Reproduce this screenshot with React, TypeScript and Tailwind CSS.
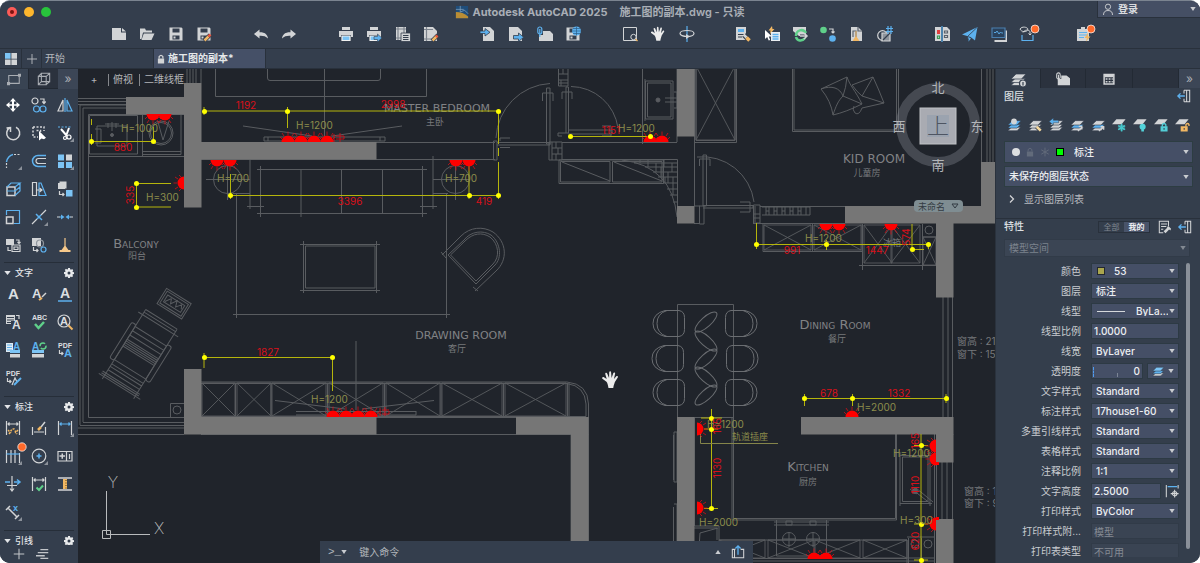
import type { ReactNode } from "react";

const G = "#d2d4d6";
const B = "#5db1ee";
const O = "#f1b763";
const GREEN = "#5fd08a";
const RED_BADGE = "#ff6a2b";

function Icon({ children, size = "size-4" }: { children: ReactNode; size?: string }) {
  return (
    <svg viewBox="0 0 16 16" className={`${size} shrink-0 overflow-visible`} fill="none" stroke={G} strokeWidth="1.2" aria-hidden="true">
      {children}
    </svg>
  );
}

const solid = { stroke: "none", fill: G };
const blue = { stroke: "none", fill: B };
const orange = { stroke: "none", fill: O };

const Hand = () => (
  <path
    stroke="none"
    fill="#ececec"
    d="M4.6 9.4 1.2 6.9c-.8-.9.4-2 1.3-1.3l2.3 1.6L3.6 2.9c-.2-1 1.2-1.4 1.6-.4l1.6 3.8.1-4.9c.1-1 1.6-1 1.6 0l.4 4.9 1.5-4.2c.4-.9 1.7-.5 1.5.5l-1 4.6 2-2.4c.7-.7 1.8.1 1.2 1L11.7 9.6c-.4 1-.5 2-1 3.1l-.4 2.1H6.3L6 13.3c-.3-1.5-.5-2.7-1.4-3.9z"
  />
);

const Floppy = () => (
  <path {...solid} fillRule="evenodd" d="M1.5 1.5h12l1 1v12h-13zM4.5 2.5v4h7v-4zM4.5 9.5v4h7v-4zM5.5 10.5h2v2h-2z" />
);

const Printer = () => (
  <>
    <path {...solid} d="M4 1h8v3H4zM1 5h14v6h-2V9H3v2H1z" />
    <path stroke="#f1f1f1" fill="#7cc4f5" d="M4 10h8v4.5H4z" />
  </>
);

const Page = () => <path {...solid} d="M3 1h7l4 4v10H3z" />;

const toolbar: ([string, ReactNode] | null)[] = [
  ["新建", <path {...solid} d="M1 2h9v4.5h5V14H1zM11 2l4 3.5h-4z" />],
  ["打开", <path {...solid} d="M1 2.5h5l1 2h6v2H4L2.5 13 1 13zM4.8 7.5H15.5L12.5 14H2.5z" />],
  ["保存", <Floppy />],
  ["另存为", <><Floppy /><path stroke="#343e4d" strokeWidth="4" d="m8 15 6-6" /><path stroke={O} strokeWidth="2.5" d="m8.5 14.5 4-4" /><path stroke="#e8553c" strokeWidth="2.5" d="m12.5 10.5 2-2" /></>],
  null,
  ["放弃", <path {...solid} d="M1 8l5.5-4.5v2.8C11 6 14.5 8 15 12.5 12.5 10 10 9.5 6.5 9.7v2.8z" />],
  ["重做", <path {...solid} d="M15 8 9.5 3.5v2.8C5 6 1.5 8 1 12.5c2.5-2.5 5-3 8.5-2.8v2.8z" />],
  null,
  ["打印", <Printer />],
  ["批处理打印", <><Printer /><path fill={B} stroke="#343e4d" strokeWidth=".6" d="M8 10.5h3.500V8l4.300 4-4.300 4v-2.500H8z" /></>],
  ["页面设置", <><path {...solid} d="M1 1h10v13H1z" /><path stroke="#7c838d" d="M3 1v13M9 1v13M1 3h10M1 12h10" /><path fill={G} stroke="#343e4d" strokeWidth=".8" d="M6 7h9.5v8.5H6z" /><path stroke="#343e4d" d="M8 9.5h5.5M8 11.5h5.5M8 13.5h5.5" /></>],
  ["图纸编辑", <><path {...solid} d="M1 1h9l4 4v10H1z" /><path stroke="#7c838d" d="M3.5 1v14M1 3.5h9M1 13h10" /><path stroke="#343e4d" strokeWidth="4" d="m9 15 6-6" /><path stroke={O} strokeWidth="2.5" d="m9.5 14.5 4-4" /><path stroke="#e8553c" strokeWidth="2.5" d="m13 11 1.5-1.5" /></>],
  null,
  ["输入", <><Page /><path fill={B} stroke="#343e4d" strokeWidth=".8" d="M0 5h5V2.5L10 6.3 5 10V7.5H0z" /></>],
  ["输出", <><path {...solid} d="M1 1h9l4 4v10H1z" /><path fill={B} stroke="#343e4d" strokeWidth=".8" d="M5.5 9.5h5V7l5.2 4.2-5.2 4.3V13h-5z" /></>],
  ["附着", <><path {...solid} d="M2 9h4V5h7l3 3v7H2z" /><rect x=".8" y="1" width="4" height="7" rx="2" stroke={B} /><path d="M2.8 3v8" stroke={B} /></>],
  ["保存到 Web", <><Floppy /><circle cx="11.5" cy="5" r="4.5" {...blue} /><path stroke="#2c5f88" strokeWidth=".7" d="M7 5h9M11.5.5v9M8 2.5h7M8 7.5h7" /></>],
  null,
  ["窗口缩放", <><path d="M1.5 1.5h13v13h-13z" strokeWidth="1" /><circle cx="11.5" cy="11" r="2.7" fill="#343e4d" strokeWidth="1" /><path stroke={O} d="m13.5 13 2 2" /></>],
  ["平移", <Hand />],
  ["动态观察", <><path d="M8 0v16" stroke={B} /><ellipse cx="8" cy="7.5" rx="7" ry="3" /><path {...solid} d="M7 8v5l4-2.5z" /></>],
  null,
  ["特性匹配", <><path {...solid} d="M1 1h10v13H1z" /><path stroke="#343e4d" d="M3 8.5h6M3 11h4" /><path {...blue} d="M3 3h6v3H3z" /><path stroke="#343e4d" strokeWidth="5" d="m9 9 5 5" /><path strokeWidth="2.5" d="m8.5 8.5 3 3" /><path stroke={O} strokeWidth="3.5" d="m11.5 11.5 3 3" /></>],
  ["快速选择", <><path {...orange} d="M8 0 4.5 4.5h2L6 8l4.5-5h-2z" /><path fill="#fff" stroke="none" d="M1 4v9l2.2-2 1.5 3.5 1.5-.6L4.8 10.5H8z" /><path stroke="none" fill="#e9edf0" d="M7 6h9v9H7z" /><path stroke={B} strokeWidth="1.5" d="M8.5 8.5h6M8.5 10.7h6M8.5 13h6" /></>],
  ["外部参照", <><path {...solid} d="M1 1h13v9H7L1 5z" /><path stroke={GREEN} strokeWidth="2.5" d="M4 10c0-6 7-8 10-3M13 12c-3 4-8 3-9-1" /><path stroke="#343e4d" strokeWidth="3" d="M8 10h7" /><path strokeWidth="1.5" d="M8 10h7M12 7l3 3-3 3" /></>],
  ["图块替换", <><circle cx="3.5" cy="4" r="3.3" stroke="none" fill={GREEN} /><circle cx="12.5" cy="12.5" r="3.3" {...blue} /><path d="M9 3h4v4M11.5 5.5 13 7l1.5-1.5" /></>],
  ["清理", <><path {...solid} d="M2 1h7l4 4v10H2z" /><path stroke="#59616d" d="M4 11V5h3v6M9 1v4h4" /><path {...orange} d="M6.5 5h1v5.5L10.5 15h-7l3-4.5z" /></>],
  ["计数", <><circle cx="5.5" cy="9.5" r="4.8" /><path fill="#8d939b" d="M5 7h8v8H5z" /><path d="M6 14 13 7" stroke="#343e4d" /><path stroke={B} d="M11 0v8M14 0v8M9 2.5h7M9 5.5h7" /></>],
  null,
  ["图形比较", <><path {...solid} d="M1 1h6v14H1zM9 1h4l3 3v11H9z" /><path stroke={B} d="M8 0v16" /><path fill="#e03e3e" stroke="none" d="M3 4h3v4H3z" /><path stroke="#3a9b55" d="M3.5 10h2v2.5h-2z" /><path stroke="#59616d" d="M10.5 5h3v2h-3zM10.5 9.5h3v2h-3z" /></>],
  ["共享", <><path {...blue} d="M0 8.5 15.5 1 13 14.5 8.5 11z" /><path {...blue} d="M5.5 10.5 6.5 15.5l2.5-3z" /><path stroke="#343e4d" strokeWidth=".8" d="M15 1.5 5.5 10.5l1 4" /></>],
  ["活动洞察", <><path {...solid} d="M3.5 14h11V4.5h1.5V16H3.5z" /><path fill="#2b425c" stroke="#4b7fae" d="M1 2h13v9.5H1z" /><path stroke={B} strokeWidth=".9" d="M3 6.5h2L6 5l2 3 1.5-2 1 1H12" /></>],
  ["连接", <><path strokeWidth="1" d="M1 3C3 0 8 1 9 3c-1 4-7 3-8 0zM4 6.5c2-3 5-3 7-1V9M9.5 7.5 11 9l1.5-1.5" /><path stroke={B} d="M3 9v5.500h11V9" /><circle cx="16" cy="3" r="4" fill={RED_BADGE} stroke="#fff" strokeWidth=".7" /></>],
  null,
  ["快捷方式", <><path {...solid} d="M1 3h12v12H1zM5 1h4v3H5z" /><path stroke={B} d="M3 6.5h8M3 9h8M3 11.5h5" /><path {...orange} d="M12 7 8.5 12h2.3L10 15.5l4.500-5h-2.500z" /><circle cx="15" cy="3" r="4" fill={RED_BADGE} stroke="#fff" strokeWidth=".7" /></>],
];

const Corner = () => <path stroke="none" fill="#8b919a" d="M17 13v4h-4z" />;
const Letter = ({ x = 2, y = 14, size = 15, color = "#dcdee0", children }: { x?: number; y?: number; size?: number; color?: string; children: string }) => (
  <text x={x} y={y} fontSize={size} fill={color} stroke="none" className="font-['Liberation_Sans',sans-serif] font-bold">{children}</text>
);

const modifyTools: [string, ReactNode][] = [
  ["移动", <path stroke="none" fill="#fff" d="M8 1 11 4.500H9v2.700h2.500V5L15 8l-3.500 3V8.800H9v2.700h2L8 15l-3-3.500h2V8.800H4.500V11L1 8l3.500-3v2.200H7V4.500H5z" />],
  ["复制", <><circle cx="4" cy="4" r="3" /><path d="M9 2h4v4M11.3 4.5 13 6.5l1.7-2" /><circle cx="5.5" cy="12" r="3" stroke={B} /><circle cx="12" cy="12" r="3" stroke={B} /></>],
  ["镜像", <><path d="M6 3v11H1z" /><path d="M10 3v11h5z" stroke={B} /><path d="M8 1v14" stroke={B} /></>],
  ["旋转", <path strokeWidth="1.5" d="M5 2.5A6.500 6.500 0 1 0 11 2.300M1.500 3l4-.5V7" />],
  ["选择", <><path strokeWidth="1.5" strokeDasharray="2 1.5" d="M2 2h11v4M2 2v10h5" /><path strokeDasharray="2 1.5" strokeWidth="1.5" d="M5.5 5.5h4v4" /><path stroke="none" fill="#fff" d="M8 6v9.500l2.500-2 2.500.7 2-1.500z" /></>],
  ["修剪", <><path stroke={B} strokeDasharray="2 1.5" d="M1 2h14" /><path stroke="#fff" strokeWidth="2" d="m4 4 6 7M12 3 9 11" /><circle cx="12" cy="12" r="2" stroke="#fff" /><circle cx="8" cy="13" r="1.5" stroke="#fff" /><Corner /></>],
  ["圆角", <><path stroke={B} strokeWidth="1.5" d="M1.500 9C2 5 5 2 8 1.500" /><path strokeDasharray="2 1.5" d="M9 1.500h6M1.500 10v5" /><Corner /></>],
  ["偏移", <><path stroke={B} strokeWidth="1.5" d="M15 2.500H7a5.500 5.500 0 0 0 0 11h8" /><path d="M15 5.500H7.500a2.500 2.500 0 0 0 0 5H15" /></>],
  ["阵列", <><path stroke="none" fill="#7cc4f5" d="M1 1.500h6v6H1zM9 9h6v6H9zM1 9h6v6H1z" /><path {...solid} d="M9 1.500h6v6H9z" /><Corner /></>],
  ["拉伸", <><path d="M2 6h8v8.500H2z" strokeWidth="1.5" /><path stroke={B} d="m2 6 4-4h9l-5 4M15 2v8l-5 4.500M2 10h8l5-4" /></>],
  ["斜切", <><path d="M1.500 1.500h4v13h-4z" /><path stroke={B} d="M8 2h2l5 12.500H8z" /><path d="M5 9h5M8.500 7l2.500 2-2.500 2" /></>],
  ["替换", <><path {...solid} d="M2.500.5h7v7h-7zM1 2h7v6H1z" /><path stroke="none" fill="#7cc4f5" d="M9 9h6.500v6.500H9z" /><path d="M2.500 10v3.500H7M5.500 12 7 13.500 5.500 15" /></>],
  ["缩放", <><path stroke={B} d="M1.500 6V1.500h13v13H9" /><path strokeWidth="1.5" d="M1.500 8h6.500v6.500H1.500z" /></>],
  ["打断", <><path d="M1 15 6 10M10 6l5-5" /><path stroke={B} strokeWidth="1.5" d="m5 5 6 6M6 10l4-4" /><Corner /></>],
  ["合并", <><path {...solid} d="M0 7.400h3v1.200H0zM13 7.400h3v1.200h-3z" /><path {...blue} d="M2.500 7.400H4v-2L7.500 8 4 10.600v-2H2.500zM13.500 7.400H12v-2L8.500 8l3.500 2.600v-2h1.500z" /></>],
  ["对调", <><path {...solid} d="M1 2h8v6H1z" /><path d="M7 8h8v6.500H7zM9 10h4v2.500H9z" /><path d="M11 3h3v3M3 10v3.500h3M12.500 5 14 6.500 15.500 5" /></>],
  ["转换", <><path {...solid} d="M1 1h9v8H1z" /><circle cx="9" cy="6.5" r="3.5" stroke="#8f959d" /><path d="M2.500 10v3.500H7M5.500 12 7 13.500 5.500 15" /><circle cx="12.5" cy="12.5" r="2.5" stroke={B} /></>],
  ["清扫", <path stroke="none" fill="#f7c98b" d="M7.400 1h1.200v8l3.900 5.500h-9L7.400 9zM2.500 13h11v2h-11z" />],
];

const textTools: [string, ReactNode][] = [
  ["多行文字", <Letter x={3} y={13} size={15}>A</Letter>],
  ["单行文字", <><Letter x={1} y={12} size={13}>A</Letter><path stroke={O} strokeWidth="2" d="m8 14 3-2" /><path strokeWidth="1.5" d="m11 11 4-4" /></>],
  ["文字样式", <><Letter x={3} y={12} size={14}>A</Letter><path stroke={B} d="M1 15h14" strokeWidth="1.5" /></>],
  ["文字对齐", <><path {...solid} d="M1 1h9v9H1z" /><path stroke="#343e4d" d="M2 3.500h7M2 6h7M2 8.500h7" /><path d="M11 1.500h3V5" /><path fill="#343e4d" stroke="none" d="M6 7h10v9H6z" /><Letter x={7} y={15} size={12}>A</Letter></>],
  ["拼写检查", <><Letter x={1} y={6} size={7}>ABC</Letter><path stroke={GREEN} strokeWidth="2.5" d="m4 10 3.500 4L13 8" /></>],
  ["查找文字", <><circle cx="7" cy="7" r="6" /><Letter x={3} y={11} size={11}>A</Letter><path stroke={O} strokeWidth="2" d="m11.500 11.500 4 4" /></>],
  ["文字图层", <><path stroke="none" fill="#dfeaf3" d="M1 1h7v9H1z" /><path stroke={B} d="M2 3h5M2 5.500h5M2 8h5" /><Letter x={8} y={8} size={10} color={B}>A</Letter><path stroke="none" fill="#7cc4f5" d="M5 8h10v3H5z" /><path {...solid} d="M5 12h10v3.500H5z" /></>],
  ["更新文字", <><Letter x={1} y={8} size={10} color={B}>A</Letter><circle cx="12" cy="4" r="3" stroke={GREEN} strokeDasharray="7 2" strokeWidth="1.5" /><path stroke="none" fill="#7cc4f5" d="M1 8h12v3H1z" /><path {...solid} d="M1 12h12v3.500H1z" /></>],
  ["PDF 文字", <><Letter x={1} y={6} size={7}>PDF</Letter><path d="M2.500 8v3.500H6M4.500 10 6 11.500 4.500 13" /><Letter x={7} y={15} size={11} color={B}>A</Letter></>],
  ["PDF 设置", <><Letter x={1} y={6} size={7}>PDF</Letter><path d="M2.500 8v3.500H6M4.500 10 6 11.500 4.500 13M7 15l3-7 2 4" /><path stroke={B} strokeWidth="2" d="m9 15 5-5 2-2" /></>],
];

const Dim = ({ c = G }: { c?: string }) => (
  <><path d="M1.500 1v14M14.500 1v14" /><path stroke={c} d="M3 4h10M4.500 2.500 3 4l1.500 1.500M11.500 2.500 13 4l-1.500 1.500" /></>
);

const dimTools: [string, ReactNode][] = [
  ["快速标注", <><Dim /><path stroke={O} strokeWidth="1.5" strokeDasharray="2 1.2" d="M4 14 7 9h2l3 5M3 10l3 3M13 10l-3 3" /></>],
  ["编辑标注", <><path d="M1.500 7v8M14.500 7v8M3 12h10" /><path stroke={O} strokeWidth="2.5" d="m7 10 3-3" /><path strokeWidth="1.5" d="m10 7 4-5" /></>],
  ["线性标注", <><Dim c={B} /><Corner /></>],
  ["连续标注", <><path d="M1.500 2v13M6 2v13M10 2v13M14.500 5v10" /><path stroke={B} d="M1.500 6h13" /><circle cx="17" cy="-1" r="4.200" fill={RED_BADGE} stroke="#fff" strokeWidth=".7" /><Corner /></>],
  ["直径标注", <><circle cx="8" cy="8" r="6.800" /><path stroke={B} strokeWidth="1.5" d="M8 5.500v5M5.500 8h5" /><Corner /></>],
  ["公差", <><path d="M1 3.500h14v9.500H1zM9.500 3.500V13" /><path {...solid} d="M2.500 7.300H4.500V5.500h1.500v1.800h2v1.500H6v2H4.500v-2h-2z" /><path d="M12.500 6v5" /></>],
  ["基线", <><path stroke={B} d="M0 6h5M9 6h6M12 3.500 15 6l-3 2.500" strokeWidth="1.5" /><path d="M7 0v15M5 12.500 7 15l2-2.500M2 9.500h10" /></>],
  ["检验", <><Dim /><path stroke={GREEN} strokeWidth="2" d="m5.500 11.500 2.500 2.500 4-4.500" /></>],
  ["调整间距", <><path d="M1 2h14M1 14h14" strokeWidth="1.5" /><path {...orange} d="M6 3h4v10H6z" /><path stroke="#8b6a30" d="M8 4.500h2M8 7h2M8 9.500h2M8 12h2" strokeWidth=".8" /></>],
  ["坐标标注", <><path d="m1 6 4-4M10 15l4-4M3 4l9 9" strokeWidth="1.5" /><Letter x={8} y={7} size={9} color={B}>x</Letter><Corner /></>],
];

function Gear() {
  return (
    <svg viewBox="0 0 16 16" className="size-2.5" fill="#e8eaec" aria-hidden="true">
      <path fillRule="evenodd" d="M6.500 0h3l.4 2 1.400.6L13 1.500 14.800 3.500l-1.200 1.600.6 1.400 1.800.3v2.700l-1.900.3-.6 1.400 1.100 1.700-1.900 1.800-1.600-1.100-1.300.6L9.500 16h-3l-.4-1.900-1.400-.6-1.600 1.200-2-2 1.200-1.600-.6-1.300L0 9.500v-3l1.900-.3.5-1.300L1.200 3.300l2-2 1.600 1.200 1.400-.6zM8 5.600a2.400 2.400 0 1 0 0 4.800 2.400 2.400 0 0 0 0-4.800z" />
    </svg>
  );
}

const Caret = ({ className = "" }: { className?: string }) => (
  <svg viewBox="0 0 8 6" className={`h-1 w-1.5 shrink-0 ${className}`} fill="#c9ccd0" aria-hidden="true"><path d="M0 0h8L4 6z" /></svg>
);

function ToolGrid({ tools }: { tools: [string, ReactNode][] }) {
  return (
    <div className="grid grid-cols-3">
      {tools.map(([name, icon]) => (
        <button key={name} aria-label={name} className="flex h-7 items-center justify-center">
          <Icon>{icon}</Icon>
        </button>
      ))}
    </div>
  );
}

function ToolHeading({ title }: { title: string }) {
  return (
    <div className="mx-1 flex h-[18px] shrink-0 items-center border-t border-[#262e39] pt-0.5 text-[9px] font-medium text-[#e3e5e8]">
      <svg viewBox="0 0 8 5" className="mr-1 h-1 w-[7px]" fill="#e3e5e8" aria-hidden="true"><path d="M0 0h8L4 5z" /></svg>
      <h2 className="flex-1 leading-none">{title}</h2>
      <button aria-label={`${title}设置`}><Gear /></button>
    </div>
  );
}

function ToolPalette() {
  return (
    <aside className="flex w-[78px] shrink-0 flex-col overflow-hidden bg-[#343e4d]">
      <div className="mb-0.5 flex h-5 shrink-0">
        <button aria-label="绘图" className="flex w-7 items-center justify-center bg-[#394453]">
          <Icon size="size-3.5"><path d="M2 4h12v9H2z" stroke="#a9adb3" /><path stroke="none" fill="#a9adb3" d="M0 11.500h3.500V15H0zM12.500 2H16v3.500h-3.500z" /></Icon>
        </button>
        <button aria-label="三维" className="flex w-[30px] items-center justify-center border-b border-l border-[#222933] bg-[#2b323e]">
          <Icon size="size-3.5"><path stroke="#a9adb3" d="M1.500 5h9v9.500h-9zM5 1.500h9.500V11H5zM1.500 5 5 1.500M10.500 5l4-3.500M10.500 14.500 14.500 11M1.500 14.500 5 11" /></Icon>
        </button>
        <button aria-label="更多" className="flex-1 bg-[#3c4656] text-[12px] leading-none text-[#a9adb3]">»</button>
      </div>
      <div className="mb-[3px] shrink-0"><ToolGrid tools={modifyTools} /></div>
      <div className="mb-1 shrink-0"><ToolHeading title="文字" /><ToolGrid tools={textTools} /></div>
      <div className="mb-1 shrink-0"><ToolHeading title="标注" /><ToolGrid tools={dimTools} /></div>
      <div className="min-h-0 flex-1 overflow-hidden"><ToolHeading title="引线" /></div>
      <div className="flex h-[18px] shrink-0 items-center gap-2.5 bg-[#343e4d] pl-3">
        <button aria-label="添加"><Icon size="size-3.5"><path d="M8 2v12M2 8h12" stroke="#c2c5c9" /></Icon></button>
        <button aria-label="列表"><Icon size="size-3.5"><path d="M5 3h9M2 6.500h12M0 10h10M5 13h9" stroke="#c2c5c9" strokeWidth="1.5" /></Icon></button>
      </div>
    </aside>
  );
}

/* ---------- floor plan ---------- */

const LINE = "#595c60";

// x, y, width, height
const walls = [
  [126, 97, 58, 17], [184, 83, 17, 124], [201, 142, 175, 17], [184, 369, 17, 65], [201, 417, 175, 17],
  [516, 417, 72, 17], [571, 434, 17, 129], [677, 69, 17, 67], [677, 206, 17, 17], [845, 206, 150, 17],
  [981, 162, 14, 45], [936, 223, 17, 74], [677, 417, 17, 146], [801, 417, 152, 17], [936, 434, 17, 28], [936, 519, 17, 44],
];

// cupboards with crossed diagonals
const crossed = [
  [202, 383, 33, 33], [237, 383, 34, 33], [272, 383, 54, 33], [329, 383, 54, 33], [386, 383, 54, 33],
  [442, 383, 60, 33], [505, 383, 61, 33], [696, 66, 39, 74], [764, 225, 47, 25], [814, 225, 47, 25],
  [864, 225, 28, 38], [891, 225, 29, 38], [923, 237, 13, 28], [719, 540, 46, 18], [768, 540, 46, 18],
  [815, 540, 45, 18], [863, 540, 44, 18],
];

const outline = [
  // balcony
  "M78 98.5H126M78 101.5H126M78 104.5H126M184 428H78M184 434.5H78",
  "M80 425V105H126M83 422V108H126M88.5 417.5V114.5H184M80 425.5H184M83 422.5H184M88.5 417.5H184",
  "M88 156.5H184M89.5 115.5H137.5V154H89.5zM142.5 115V156M142.5 151.5H181M142.5 154.5H181V115",
  "M97 126H127V146H97zM95 129H101V143H95M112 122V131M105 124H119M108 123V128M116 123V128",
  "M158 122 163 140 169 121M170.5 403.5H184M170.5 403.5V417M201 69V83M187 69V83M190 69V83M193 69V83M196 69V83",
  // bed
  "M215.5 69V96.5H426.5V69M267.5 69V78Q267.5 80.5 270 80.5H378Q380.5 80.5 380.5 78V69M324.5 69V136",
  "M243 126 312 136M402 126 332 136M264 137H385V141H264zM268 137V141M380 137V141",
  // living wall, jamb
  "M376 142.5H495M376 159.5H495M493.5 141V160H497V141zM201 159.5H376",
  "M206 179.5H250M227.5 159V200M433 179.5H470M455.5 159V200M250 159V209M247 206.5H264M433 156V209M420 206.5H437M233 193.5H250M433 193.5H448",
  "M257 169.5H427M257 213.5H427M260.5 166V217M301 169V217M341.5 169V213M382.5 169V213M422.5 166V217",
  "M236.5 193V318M446.5 193V318M233 314.5H450",
  "M300 244.5H380M300 290.5H380M303.5 241V293M376.5 241V293M305.5 246H375V288H305.5z",
  "M442 255 461 236C470 227 483 226 493 232 507 242 508 260 496 271L475 291M441 252 446 258M473 287 478 291",
  "M448 255 464 240C471 231 483 230 491 235 501 243 502 258 495 265L476 284Z M450.5 255 465 241C473 233 482 232 490 237 499 244 500 257 493 264L476 281Z",
  // tv cabinet
  "M201 382H567Q588 384 588.5 404V417M201 383.5H567Q585 386 586 404V416.5H201M567.5 383V416M569 383V416",
  "M235.5 383V416M271 383V416M327.5 383V416M384.5 383V416M441 383V416M503.5 383V416",
  "M356 341V410M296 411.5H416M296 415H416V411M275 400.5 345 409M434 400.5 362 409M376 417.5H516M376 434.5H516M201 434.5H376M516 434.5H571V563M588.5 417V563",
  // doors
  "M496 138A57 57 0 0 1 550 83.5M546.5 88H550V144H546.5zM542.5 101V93H553V101M497 142.5H550V145H497M510 138H500V141M510 147.5H500",
  "M571 86.5A48 48 0 0 1 618 128M566 87H568.5V133H566zM562 99V92H572V99M568 130H612V134H568M602 126H611V136H602M562 136H558V133H566",
  "M549 142H562V160H549zM552 142V160M552 148H562M552 154H562M556 142V148M558 148V154M556 154V160",
  "M558.5 69V86H568V69M558 74H568M558 80H568M563 69V74M561 80V86M558 83H568",
  "M562 142.5H677M562 159.5H677.5V206M694.5 136V206M677 69V142",
  "M559 160V183.5H663.5V160M559 160H663M560.5 161.5H610V182H560.5zM612.5 161.5H662V182H612.5zM562 162 610 181M614 162 662 181",
  "M622 160Q672 166 677 217M642.5 69V144M645 79V121M645.5 81H673V119H645.5zM647.5 83H671V117H647.5zM665 98H677M665 102H677M674 92H677V108H674",
  // bricks behind the curved corner
  "M634 163H677M645 167H677M653 172H677M658 177H677M663 183H677M667 189H677M670 195H677M673 202H677M640 160V163M648 160V167M656 163V172M664 160V167M672 163V172M661 167V177M668 172V183M673 177V195M665 177V183",
  // wardrobe and kid room
  "M694.5 69V142.5H736.5V69M696 69V140.5H735V69M697 157A52 52 0 0 1 754 202M703 155H706.5V206H703zM699.5 166V159H710V166M703 205.5H753V208H703M740 202H750V212H740M699.5 206H704V224H699.5zM694 206H700M694 223.5H700",
  "M753.5 205H760V223H753.5zM755 206V222M753 214H760M753 218H760M760 206.5H845M753 223.5H845M762 207H810V215H762M766 207V215M769 207V215M774 207V215M777 207V215M782 207V215M785 207V215M790 207V215M793 207V215M798 207V215M801 207V215M806 207V215M766 211H769M774 211H777M782 211H785M790 211H793M798 211H801",
  "M792.5 69V131.5H899M794 69V130H897M896.5 69V131M898.5 69V131M981.5 69V162M987 69V162M990 69V162M993 69V162",
  "M821 89 847 77C850 86 855 90 862 104Q846 112 833 115 831 101 821 89C832 85 840 88 843 96 838 101 836 106 833 115M847 77Q846 88 843 96L862 104M852 85 873 77Q879 90 884 103L862 108Q859 116 855 113 852 110 854 106M873 77 862 96 884 103M862 96Q857 92 852 85",
  "M763 223.5V251.5H862V224M812.5 224V251M859 265.5H936M862.5 224V270M922.5 224V270M936.5 223V265M923 237H936",
  // windows
  "M943 297V417M948 297V417M952.5 297V417M942 462V520M947 462V520M952.5 462V520M936.5 462V520M934.5 434V563",
  // dining table
  "M677.5 417V304.5H733.5V417M694 417.5H733",
  // kitchen
  "M733.5 417V518.5H895.5V434M732 417V520H896.5V434M694.5 417V526H719V540H907V563M698 563 700 533 718 528M694 528H717V540M719 558.5H907M719 561H935",
  "M900 452V506M930 452V506M900 455.5H936M900 503.5H932M902.5 457H928V501.5H902.5zM913 490 931 504M916 488 933 502M910 489 917 494",
  "M776.5 520V556H826.5V520M774 522H829M774 525H829M782 539H796M789 532V547M806 539H820M813 532V547M786 521H792V525H786zM810 521H816V525H810z",
  "M907 537H935M907 558H935M908.5 538V563M921.5 538V560M674 432H677V482H674zM674 504H677V563M673.5 435V480M673.5 507V563",
];

const leaves = [[706, 322, -42], [706, 341, 42], [706, 359, -42], [706, 377, 42], [706, 395, -42]];
const chairsLeft = [[653, 310], [652, 345], [653, 379]];
const chairsRight = [[726, 310], [727, 345], [726, 379]];

// x, y, rotation
const sockets = [
  [153, 114, 180], [165, 114, 180], [184, 183, -90],
  [288, 142, 0], [301, 142, 0], [314, 142, 0], [327, 142, 0],
  [217, 160, 180], [230, 160, 180], [456, 160, 180], [469, 160, 180],
  [650, 142, 0], [662, 142, 0], [826, 224, 180], [839, 224, 180], [891, 224, 180],
  [333, 417, 0], [346, 417, 0], [358, 417, 0], [371, 417, 0], [852, 417, 0],
  [697, 429, 90], [697, 508, 90], [814, 559, 0], [826, 559, 0],
  [936, 446, -90], [936, 459, -90], [936, 524, -90],
];

const dimLines =
  "M91.5 119V125M91.5 134V145M91.5 141.5H153.5V127M136.5 207H171M136.5 183.5H171M136.5 183V207M204 111H498.5V144M498.5 162V199M287.5 107V128M204 107V115M230.5 174V199M230 195.5H498.5M469 165V199" +
  "M570.5 136.5H650M756.5 223V249M756.5 244.5H928.5V249M826.5 240V250M912 224V249.5H924M204 353V368M204 357.5H332.5V391M804.5 394V406M804.5 398.5H946M852.5 394V406M946 394V403" +
  "M711.5 409V510M701 418H722M704 429H718M704 508.5H718M921 434V563M914 445.5H928M914 524H928M914 560H928M498.5 148V156";

const dots = [
  [91, 141], [153, 141], [136, 183], [136, 207], [204, 111], [287, 111], [498, 111],
  [230, 195], [469, 195], [498, 195], [570, 136], [650, 136], [756, 244], [826, 244],
  [928, 244], [912, 249], [204, 357], [332, 357], [804, 398], [852, 398],
  [946, 398], [711, 418], [711, 429], [711, 508], [921, 445], [921, 524], [921, 560],
];

// text, centre x, baseline, rotated
const measures: [string, number, number, boolean?][] = [
  ["880", 123, 151], ["335", 134, 195, true], ["1192", 246, 109], ["2998", 393, 108], ["3396", 350, 205],
  ["419", 484, 205], ["1151", 611, 134], ["991", 792, 254], ["1447", 877, 254], ["574", 910, 237, true],
  ["1827", 268, 356], ["678", 829, 397], ["1332", 899, 397], ["1130", 721, 468, true], ["165", 721, 426, true],
  ["165", 919, 441, true], ["1110", 919, 485, true], ["620", 919, 541, true],
];

const heights: [string, number, number][] = [
  ["H=1000", 121, 132], ["H=300", 146, 201], ["H=1200", 296, 129], ["H=700", 217, 182], ["H=700", 445, 182],
  ["H=1200", 618, 132], ["H=1200", 805, 242], ["H=1200", 311, 403], ["H=2000", 857, 411], ["H=1200", 707, 428],
  ["H=2000", 699, 526], ["H=1200", 893, 457], ["H=300", 900, 524],
];

function FloorPlan() {
  return (
    <svg
      viewBox="78 69 917 494"
      preserveAspectRatio="xMidYMid slice"
      className="block h-full w-full font-[Inter,'Noto_Sans_CJK_SC',sans-serif]"
      fill="none"
      stroke={LINE}
      role="img"
      aria-label="施工图"
    >
      {outline.map((d) => <path key={d} d={d} />)}
      {crossed.map(([x, y, w, h]) => (
        <path key={`${x}-${y}`} strokeWidth=".9" d={`M${x} ${y}h${w}v${h}h${-w}zl${w} ${h}M${x} ${y + h}l${w} ${-h}`} />
      ))}
      <circle cx="161" cy="133" r="12" /><circle cx="161" cy="133" r="10.5" />
      <circle cx="112" cy="135" r="1.5" fill={LINE} />
      <circle cx="227.5" cy="179.5" r="14" /><circle cx="455.5" cy="179.5" r="14" />
      <circle cx="658" cy="100" r="2" fill={LINE} /><circle cx="929" cy="230" r="4" />
      <circle cx="789" cy="539" r="6.5" /><circle cx="813" cy="539" r="6.5" />
      <circle cx="928" cy="544" r="4" /><circle cx="915" cy="544" r="4" />
      <circle cx="177" cy="410" r="4" />
      <circle cx="915" cy="491" r="2.5" fill={LINE} />
      <g stroke="#6a6d71">
        {leaves.map(([x, y, r]) => <ellipse key={y} cx={x} cy={y} rx="14" ry="5" transform={`rotate(${r} ${x} ${y})`} />)}
        {chairsLeft.map(([x, y]) => (
          <path key={y} d={`M${x + 12} ${y + 0.5}h14q5.5 1 5.5 7v12q0 6-5.5 7h-14q-12-3-12-13t12-13zM${x + 14} ${y + 0.5}q-10 3-10 13t10 13`} />
        ))}
        {chairsRight.map(([x, y]) => (
          <path key={y} d={`M${x + 19} ${y + 0.5}h-14q-5.5 1-5.5 7v12q0 6 5.5 7h14q12-3 12-13t-12-13zM${x + 17} ${y + 0.5}q10 3 10 13t-10 13`} />
        ))}
      </g>
      {/* lounge chair */}
      <g transform="translate(103 376) rotate(32)">
        <path d="M1 3V-79M38 3V-79M-5 0H44M-3 -2H41M-3 -4H41M1 -8H38M1 -12H38M1 -15H38M1 -20H38M1 -36H38M1 -38H38M1 -40H38M1 -42H38M1 -44H38M1 -49H38M1 -54H38M1 -59H38M-4 -73H43M1 -76H38M1 -79H38" />
        <rect x="-4" y="-61" width="5" height="42" rx="2" />
        <rect x="38" y="-61" width="5" height="42" rx="2" />
        <rect x="7.5" y="-108" width="29" height="18" />
        <rect x="9.5" y="-106" width="25" height="14" />
        <path d="M12-103H32V-95H12zM13-96l4-6 2 5 4-6 2 6 4-5 2 4" />
      </g>
      <g fill="#767676" stroke="none">
        {walls.map(([x, y, w, h]) => <rect key={`${x}-${y}`} x={x} y={y} width={w + 0.5} height={h + 0.5} />)}
      </g>

      <g fill="#808285" stroke="none" textAnchor="middle" className="font-['DejaVu_Sans','Noto_Sans_CJK_SC',sans-serif]">
        <g className="[font-variant-caps:small-caps]">
          <text x="136" y="248" fontSize="13">Balcony</text>
          <text x="835" y="329" fontSize="13">Dining Room</text>
          <text x="808" y="471" fontSize="13">Kitchen</text>
        </g>
        <text x="437" y="112" fontSize="11">MASTER BEDROOM</text>
        <text x="874" y="163" fontSize="12">KID ROOM</text>
        <text x="461" y="339" fontSize="11">DRAWING ROOM</text>
      </g>
      <g fill="#77797c" stroke="none" fontSize="9" textAnchor="middle">
        <text x="137" y="259">阳台</text><text x="435" y="125">主卧</text><text x="867" y="176">儿童房</text>
        <text x="457" y="352">客厅</text><text x="837" y="342">餐厅</text><text x="808" y="485">厨房</text><text x="892" y="246">冰箱</text>
      </g>
      <g fill="#77797c" stroke="none" fontSize="10">
        <text x="957" y="345">窗高 : 21</text><text x="957" y="358">窗下 : 15</text>
        <text x="964" y="495">窗高 : 1</text><text x="964" y="507">窗下 : 9</text>
      </g>

      <path d={dimLines} stroke="#b5b50c" />
      <path d="M700.5 432V443.5H778" stroke="#85854a" />
      {sockets.map(([x, y, r]) => (
        <g key={`${x}-${y}`} transform={`translate(${x} ${y}) rotate(${r})`}>
          <path d="M-6.5 0a6.5 6.5 0 0 1 13 0z" fill="#f00" stroke="none" />
          <path d="M0-7v-3.500M-4-6-6-9M4-6 6-9M-6-3-8-5M6-3 8-5" stroke="#d31018" strokeWidth=".8" />
        </g>
      ))}
      <path d="M334 134v8M336 136h8M340 133v9M336 139h8v-3M380 408v8M382 410h7M385 407v9M382 414h7v-3" stroke="#d31018" strokeWidth=".9" />
      <path d="M936 462h3v3h-3zM936 517h3v3h-3z" fill="#f00" stroke="none" />
      <g fill="#ff0" stroke="none">
        {dots.map(([x, y]) => <circle key={`${x}-${y}`} cx={x + 0.5} cy={y + 0.5} r="2.5" />)}
      </g>
      <g fill="#8d8d4c" stroke="none" fontSize="10">
        {heights.map(([t, x, y]) => <text key={`${x}-${y}`} x={x} y={y}>{t}</text>)}
        <text x="732" y="440" fontSize="9">轨道插座</text>
      </g>
      <g fill="#d9101a" stroke="none" fontSize="10" textAnchor="middle">
        {measures.map(([t, x, y, turned]) => (
          <text key={`${x}-${y}`} x={x} y={y} transform={turned ? `rotate(-90 ${x} ${y})` : undefined}>{t}</text>
        ))}
      </g>

      <path stroke="#b9bbbd" d="M106.5 534.5V491M106.5 534.5H150M102.5 530.5h8v8h-8z" />
      <g stroke="none" fill="#b9bbbd" fontSize="16" textAnchor="middle" className="font-extralight">
        <text x="113" y="488">Y</text><text x="159" y="534">X</text>
      </g>
      <svg x="601" y="370" width="19" height="20" viewBox="0 0 16 16"><Hand /></svg>
    </svg>
  );
}

function ViewCube() {
  return (
    <svg viewBox="0 0 96 96" className="absolute top-2 right-[9px] size-24 font-['Noto_Sans_CJK_SC',sans-serif]" role="img" aria-label="ViewCube">
      <circle cx="48" cy="48" r="37" fill="none" stroke="#7e838d" strokeOpacity=".4" strokeWidth="10" />
      <rect x="30" y="31" width="36" height="36" fill="#a9abb2" stroke="#c0c2c6" />
      <rect x="37" y="38" width="22" height="22" fill="#9ba3af" />
      <text x="48" y="57" textAnchor="middle" fontSize="22" fill="#4e5562" className="font-light">上</text>
      <g fill="#b4b6ba" fontSize="13" textAnchor="middle">
        <text x="48" y="15">北</text><text x="48" y="93">南</text><text x="9" y="54">西</text><text x="87" y="54">东</text>
      </g>
    </svg>
  );
}

function Canvas() {
  return (
    <main className="relative min-w-0 flex-1 overflow-hidden bg-[#20242b]">
      <div className="absolute inset-0"><FloorPlan /></div>
      <div className="absolute top-0 left-0 flex h-[21px] items-center gap-1 pl-3 text-[10px] text-[#b4b6b9]">
        <button className="w-2">+</button>
        <span className="ml-1.5 h-3 w-px bg-[#85888c]" />
        <button>俯视</button>
        <span className="ml-0.5 h-3 w-px bg-[#85888c]" />
        <button>二维线框</button>
      </div>
      <ViewCube />
      <button className="absolute top-[131px] right-8 flex h-3 items-center gap-1.5 rounded-sm bg-[#7f8d92] px-1 text-[9px] leading-none text-[#333b42]">
        未命名
        <svg viewBox="0 0 8 6" className="h-1.5 w-2" fill="none" stroke="#333b42" aria-hidden="true"><path d="M1 1h6L4 5z" /></svg>
      </button>
      <div className="absolute inset-x-[242px] bottom-0 flex h-[22px] items-center bg-[#343e4d] px-2 text-[10px] text-[#b2b6bb]">
        <button aria-label="最近命令" className="flex items-center font-['Liberation_Mono',monospace] text-[11px]">&gt;_<Caret /></button>
        <input aria-label="键入命令" placeholder="键入命令" className="ml-3 min-w-0 flex-1 bg-transparent outline-none placeholder:text-[#b2b6bb]" />
        <button aria-label="展开历史" className="mr-2.5"><Caret className="rotate-180" /></button>
        <button aria-label="共享">
          <Icon size="size-3.5"><path d="M5 5H1.500v9.500h13V5H11M4 5v9.500" /><path stroke={B} strokeWidth="1.5" d="M8 11V1M5 4l3-3 3 3" /></Icon>
        </button>
      </div>
    </main>
  );
}

/* ---------- layers and properties ---------- */

const Sheets = ({ top = G, mid = G, low = G }: { top?: string; mid?: string; low?: string }) => (
  <g stroke="#343e4d" strokeWidth=".7">
    <path fill={low} d="M1 14.500 5 10.500h10.500l-4 4z" />
    <path fill={mid} d="M1 11.500 5 7.500h10.500l-4 4z" />
    <path fill={top} d="M1 8 6 3h10l-4.500 5z" />
  </g>
);
const Sheet = () => <path {...solid} d="M0 7 5 1.500h10.500L11 7z" />;

const layerTools: [string, ReactNode][] = [
  ["图层特性", <><Sheets mid={B} top={B} /><circle cx="8" cy="4" r="3.300" {...solid} /></>],
  ["图层匹配", <><Sheets /><path stroke="#343e4d" strokeWidth="5" d="m10 10 4 4" /><path stroke="#f5d9a0" strokeWidth="3" d="m10 10 4.500 4.500" /></>],
  ["上一个图层", <><Sheets /><path fill={B} stroke="#343e4d" strokeWidth=".6" d="M0 4 5 0v2.500h6v3H5V8z" /></>],
  ["图层隔离", <><Sheets mid={B} /><path d="m9 15 5-5M13.500 13V9.500H10" strokeWidth="1.5" /></>],
  ["取消隔离", <><Sheets mid={B} /><path d="m9 15 5-5M14.500 13.500V10H11" strokeWidth="1.5" /></>],
  ["冻结", <><Sheet /><path stroke="#45c6cc" strokeWidth="1.7" d="M11 6.500v9M7 8.800l8 4.500M15 8.800l-8 4.500" /><circle cx="11" cy="11" r="3" stroke="#45c6cc" strokeWidth=".8" /></>],
  ["关闭", <><Sheet /><circle cx="11" cy="10" r="3.500" stroke="none" fill="#53d3da" /><path stroke="none" fill="#53d3da" d="M9.500 12h3v3.500h-3z" /></>],
  ["锁定", <><Sheet /><path stroke="none" fill="#53cdd6" d="M7.500 9.500h8v6h-8z" /><path stroke="#53cdd6" strokeWidth="1.5" d="M9.500 10V7.500q2-2.500 4 0V10" /><path stroke="#343e4d" d="M11.500 11.500v2" /></>],
  ["解锁", <><Sheet /><path {...orange} d="M6.500 9.500h8v6h-8z" /><path stroke={O} strokeWidth="1.5" d="M12.500 10V7.500q2-2.500 3.500 0V9" /><path stroke="#343e4d" d="M10.500 11.500v2" /></>],
];

const Dock = () => (
  <Icon size="size-3.5"><path d="M8 1.500h6.500v13H8M11 1.500v13M8 1.500V5M8 11v3.500" /><path stroke={B} strokeWidth="1.5" d="M9 8H1M4 5 1 8l3 3" /></Icon>
);

const field = "h-4 w-full rounded-none border border-[#2d3a44] bg-[#454f66] text-[10px] leading-none font-medium text-[#eceef1] outline-none";
const disabledField = "h-4 w-full border border-[#313b48] bg-[#3a4453] px-0.5 text-[10px] leading-none text-[#858b94]";

function Select({ id, value, className = field, pad = "pl-1", label, caret = "" }: { id: string; value: string; className?: string; pad?: string; label?: string; caret?: string }) {
  return (
    <span className="relative block w-full">
      <select id={id} aria-label={label} className={`${className} ${pad} block appearance-none pr-2.5`}>
        <option>{value}</option>
      </select>
      <Caret className={`pointer-events-none absolute top-1/2 right-1 -translate-y-1/2 ${caret}`} />
    </span>
  );
}

function Property({ id, label, children }: { id: string; label: string; children: ReactNode }) {
  return (
    <div className="flex h-5 shrink-0 items-center gap-2.5">
      <label htmlFor={id} className="flex-1 text-right text-[10px] whitespace-nowrap text-[#c9ccd0]">{label}</label>
      <div className="flex w-[88px] items-center gap-1">{children}</div>
    </div>
  );
}

function Inspector() {
  return (
    <aside className="flex w-[205px] shrink-0 flex-col overflow-hidden border-l border-[#2a323d] bg-[#343e4c]">
      <div className="flex h-[19px] shrink-0 bg-[#2b323e]">
        <button aria-label="图层" className="flex w-11 items-center justify-center bg-[#343e4c]">
          <Icon><Sheets /><circle cx="13" cy="12.5" r="3.5" fill={G} stroke="#343e4d" /><path stroke="#343e4d" d="M13 11v3.500" /></Icon>
        </button>
        <button aria-label="外部参照" className="flex w-[46px] items-center justify-center border-x border-[#232a34]">
          <Icon size="size-3.5"><path {...solid} d="M2 8h4V4h6l4 3v8H2z" /><rect x=".8" y="1" width="4" height="7" rx="2" /><path d="M2.800 3v7" /></Icon>
        </button>
        <button aria-label="工具表" className="flex w-[46px] items-center justify-center">
          <Icon size="size-3"><path d="M1.500 2h13v12.500h-13z" strokeWidth="2" /><path d="M2 4h12" strokeWidth="3" /><path strokeDasharray="2.5 1.5" strokeWidth="2" d="M3.500 8H13M3.500 11.500H13" /></Icon>
        </button>
        <span className="flex-1 border-x border-[#232a34]" />
        <button aria-label="更多" className="w-[21px] bg-[#3c4656] text-[12px] leading-none text-[#a9adb3]">»</button>
      </div>

      <section className="shrink-0 pr-[7px] pb-[11px] pl-2">
        <div className="flex h-4 items-center justify-between pr-0.5">
          <h2 className="text-[10px] font-medium text-[#dfe1e4]">图层</h2>
          <button aria-label="停靠图层"><Dock /></button>
        </div>
        <div className="mt-[13px] flex justify-between pr-[3px] pl-0.5">
          {layerTools.map(([name, icon]) => (
            <button key={name} aria-label={name} className="flex size-4 items-center justify-center"><Icon size="size-3.5">{icon}</Icon></button>
          ))}
        </div>
        <div className="relative mt-2">
          <Select id="layer" label="当前图层" value="标注" className="h-[22px] w-full border border-[#2d3d42] bg-[#454f66] text-[10px] font-medium text-[#eceef1] outline-none" pad="pl-[69px]" />
          <span className="pointer-events-none absolute inset-y-0 left-2 flex items-center gap-[5px]">
            <span className="size-2 rounded-full bg-[#dcdee0]" />
            <Icon size="size-2.5"><path stroke="none" fill="#626b7b" d="M3 7h10v8H3z" /><path stroke="#626b7b" strokeWidth="1.5" d="M5 7V4q3-4 6 0v3" /></Icon>
            <Icon size="size-2.5"><path stroke="#626b7b" strokeWidth="1.5" d="M8 1v14M2 4.500l12 7M14 4.500l-12 7" /></Icon>
            <span className="ml-px size-2 border border-black bg-[#0f0]" />
          </span>
        </div>
        <div className="mt-[3px]">
          <Select id="state" label="图层状态" value="未保存的图层状态" className="h-[21px] w-full border border-[#2d3d42] bg-[#454f66] text-[10px] font-medium text-[#eceef1] outline-none" />
        </div>
        <button className="mt-1 flex h-4 items-center gap-2 pl-1 text-[10px] text-[#b6b9be]">
          <Icon size="size-2"><path d="m4 1 7 7-7 7" strokeWidth="2.5" /></Icon>
          显示图层列表
        </button>
      </section>

      <section className="flex min-h-0 flex-1 flex-col border-t border-[#29313c] px-2">
        <div className="flex h-[15px] shrink-0 items-center">
          <h2 className="flex-1 text-[10px] font-medium text-[#dfe1e4]">特性</h2>
          <div className="flex h-3 border border-[#29313c] text-[8px] leading-none">
            <button className="w-[25px] text-[#80868f]">全部</button>
            <button className="w-[25px] bg-[#485369] font-bold text-[#eceef1]">我的</button>
          </div>
          <button aria-label="编辑特性" className="ml-2">
            <Icon size="size-3.5"><path d="M12 7V1.500H1.500v13H6M3.500 4.500h7M3.500 7.500h6M3.500 10.500H6" /><path strokeWidth="3" d="m7.500 14 5-5" /><path {...solid} d="m10 8 4 4 1-2-3-3z" /></Icon>
          </button>
          <button aria-label="停靠特性" className="ml-1.5"><Dock /></button>
        </div>
        <div className="mt-[5px] mr-0.5 shrink-0">
          <Select id="space" label="选择" value="模型空间" caret="opacity-50" className="h-[18px] w-full border border-[#313b48] bg-[#3b4554] text-[10px] text-[#7c838d] outline-none" />
        </div>
        <div className="mt-1 mr-0.5 mb-1.5 flex min-h-0 flex-1 gap-[7px]">
          <div className="flex flex-1 flex-col overflow-hidden">
            <Property id="color" label="颜色">
              <span className="relative block w-full">
                <Select id="color" value="53" pad="pl-[22px]" />
                <span className="pointer-events-none absolute top-1 left-1.5 size-2 border border-[#23282f] bg-[#aaa64e]" />
              </span>
            </Property>
            <Property id="plane" label="图层"><Select id="plane" value="标注" /></Property>
            <Property id="ltype" label="线型">
              <span className="relative block w-full">
                <Select id="ltype" value="ByLa..." pad="pl-[44px]" />
                <span className="pointer-events-none absolute top-1/2 left-1.5 h-px w-7 bg-[#d5d8db]" />
              </span>
            </Property>
            <Property id="ltscale" label="线型比例"><input id="ltscale" defaultValue="1.0000" className={`${field} pl-0.5`} /></Property>
            <Property id="lweight" label="线宽"><Select id="lweight" value="ByLayer" /></Property>
            <Property id="alpha" label="透明度">
              <span className="relative block w-[52px]">
                <input id="alpha" defaultValue="0" className={`${field} block pr-0.5 text-right`} />
                <span className="pointer-events-none absolute top-1 left-0.5 h-2.5 border-l border-dashed border-[#4f9df0]" />
                <span className="pointer-events-none absolute bottom-0.5 left-1/2 h-1 w-px bg-[#7c8595]" />
              </span>
              <button aria-label="透明度来源" className="flex h-4 w-8 items-center justify-between border border-[#2d3a44] bg-[#454f66] px-1">
                <Icon size="size-3"><Sheets top="#7cc4f5" mid={B} /></Icon><Caret />
              </button>
            </Property>
            <Property id="tstyle" label="文字样式"><Select id="tstyle" value="Standard" /></Property>
            <Property id="dstyle" label="标注样式"><Select id="dstyle" value="17house1-60" /></Property>
            <Property id="mleader" label="多重引线样式"><Select id="mleader" value="Standard" /></Property>
            <Property id="table" label="表格样式"><Select id="table" value="Standard" /></Property>
            <Property id="ascale" label="注释比例"><Select id="ascale" value="1:1" /></Property>
            <Property id="theight" label="文字高度">
              <input id="theight" defaultValue="2.5000" className={`${field} min-w-0 flex-1 pl-0.5`} />
              <button aria-label="拾取高度">
                <Icon size="size-3.5"><path d="M1.500 1v14M15 1v4" /><path stroke={B} strokeWidth="1.5" d="M3 3h11" /><circle cx="11" cy="11" r="2.5" /><path d="M11 6.500v9M6.500 11h9" /></Icon>
              </button>
            </Property>
            <Property id="pstyle" label="打印样式"><Select id="pstyle" value="ByColor" /></Property>
            <Property id="pattach" label="打印样式附..."><input id="pattach" disabled value="模型" className={disabledField} /></Property>
            <Property id="ptable" label="打印表类型"><input id="ptable" disabled value="不可用" className={disabledField} /></Property>
          </div>
          <span className="mt-0.5 mb-2 w-1 rounded-full bg-[#8a9099]" />
        </div>
      </section>
    </aside>
  );
}

function TitleBar() {
  return (
    <header className="shrink-0 border-b border-[#29313c] bg-[#343e4d]">
      <div className="flex h-[22px]">
        <div className="flex flex-1 items-center gap-[7px] pl-[7px]">
          <button aria-label="关闭" className="flex size-2.5 items-center justify-center rounded-full bg-[#fc5b57]"><span className="size-1 rounded-full bg-[#7d1310]" /></button>
          <button aria-label="最小化" className="size-2.5 rounded-full bg-[#fdb62d]" />
          <button aria-label="全屏" className="size-2.5 rounded-full bg-[#28c43c]" />
        </div>
        <h1 className="flex items-center gap-1 pr-2 text-[11px] font-bold text-[#a9aeb6]">
          <Icon size="size-3.5">
            <path stroke="none" fill="#1f4d7a" d="M1 1h14v14H1z" />
            <path stroke="none" fill="#b98d35" d="M1 8q8 0 14 5v2H1z" />
            <path stroke="#86a6c2" strokeWidth=".8" d="M6 1v7M1 5h9M6 8l5-2 4 4" />
          </Icon>
          <span>Autodesk AutoCAD 2025</span>
          <span className="ml-2 font-semibold">施工图的副本.dwg - 只读</span>
        </h1>
        <div className="flex flex-1 justify-end">
          <button className="flex h-[17px] w-[103px] items-center gap-1 border-b border-l border-[#29313c] bg-[#454f64] px-1 text-[10px] font-bold text-[#d9dbde]">
            <Icon size="size-3"><circle cx="8" cy="5" r="3.5" /><path d="M2 16q0-6 6-6t6 6" /></Icon>
            <span className="flex-1 text-left">登录</span>
            <Caret />
          </button>
        </div>
      </div>
      <div className="flex h-[25px] justify-between pt-[3px] pr-[108px] pl-[111px]">
        {toolbar.map((tool, i) =>
          tool ? (
            <button key={i} aria-label={tool[0]} className="flex size-4 items-center justify-center"><Icon>{tool[1]}</Icon></button>
          ) : (
            <span key={i} className="w-4" />
          ),
        )}
      </div>
    </header>
  );
}

function FileTabs() {
  return (
    <nav className="flex h-5 shrink-0 border-b border-[#29313c] bg-[#343e4d] text-[10px] text-[#b4b8bd]">
      <button aria-label="概览" className="flex w-[22px] items-center justify-center border-r border-[#29313c]">
        <Icon size="size-3"><path stroke="none" fill="#7cc4f5" d="M0 0h7.500v7.500H0z" /><path {...solid} d="M8.500 0H16v7.500H8.500zM0 8.500h7.500V16H0zM8.500 8.500H16V16H8.500z" /></Icon>
      </button>
      <button aria-label="新建标签" className="flex w-5 items-center justify-center border-r border-[#29313c]">
        <Icon size="size-2.5"><path d="M8 0v16M0 8h16" strokeWidth="1.5" stroke="#b4b8bd" /></Icon>
      </button>
      <button className="w-28 border-r border-[#29313c] pl-[3px] text-left">开始</button>
      <button className="flex w-28 items-center gap-0.5 border-r border-[#29313c] bg-[#455067] pl-0.5 font-bold text-[#e6e8ea]">
        <Icon size="size-2.5"><path {...solid} d="M3 7h10v8H3z" /><path strokeWidth="2" d="M5 7V4q3-4 6 0v3" /></Icon>
        施工图的副本*
      </button>
    </nav>
  );
}

export default function App() {
  return (
    <div className="h-screen bg-white font-[Inter,'Noto_Sans_CJK_SC',sans-serif]">
      <div className="flex h-full flex-col overflow-hidden rounded-[10px] border-t border-[#7b8490] bg-[#343e4d]">
        <TitleBar />
        <FileTabs />
        <div className="flex min-h-0 flex-1">
          <ToolPalette />
          <Canvas />
          <Inspector />
        </div>
      </div>
    </div>
  );
}
